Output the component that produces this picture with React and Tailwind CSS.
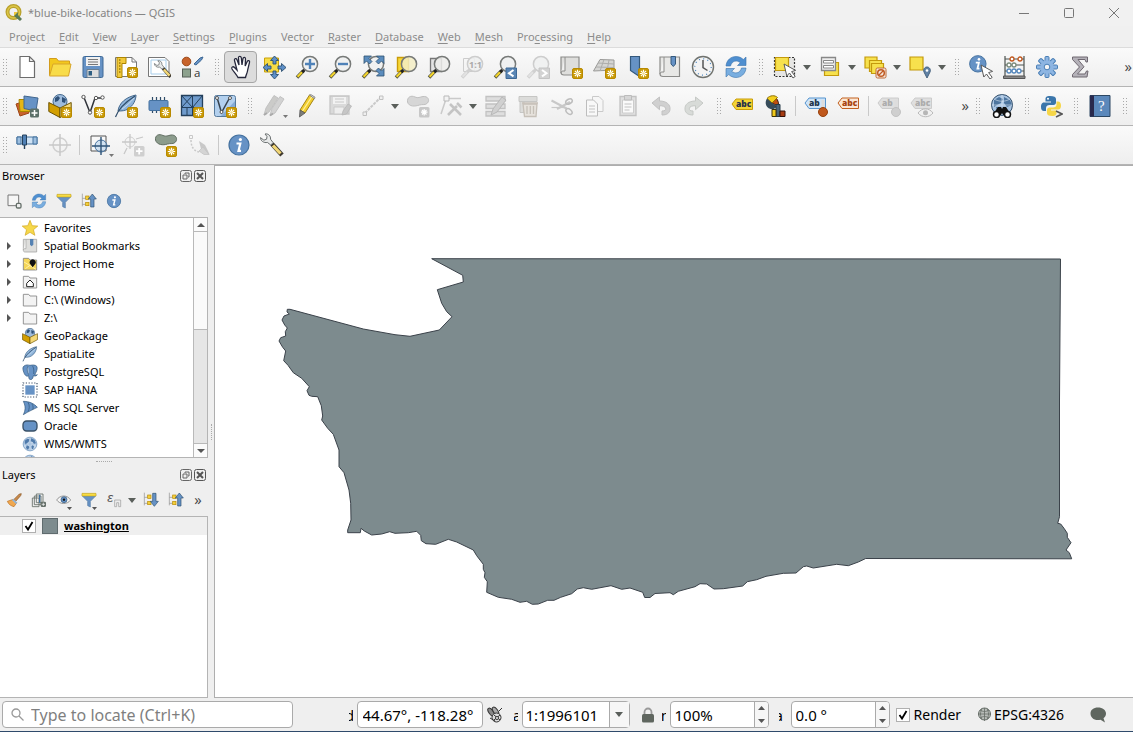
import React from "react";

/* ---------- shared drawing pieces ---------- */

const Svg = ({ size = 24, children }) => (
  <svg width={size} height={size} viewBox="0 0 24 24" fill="none" aria-hidden="true" className="block shrink-0">
    {children}
  </svg>
);

const Badge = ({ x = 13, y = 13 }) => (
  <g transform={`translate(${x} ${y})`}>
    <rect x="0.5" y="0.5" width="10" height="10" rx="1.5" fill="#c99a06" stroke="#b88900" />
    <path d="M5.5 1.8v7.4M1.8 5.5h7.4M2.9 2.9l5.2 5.2M8.1 2.9l-5.2 5.2" stroke="#fff" strokeWidth="1.2" />
    <circle cx="5.5" cy="5.5" r="1.3" fill="#f2dc8a" />
  </g>
);

const Lens = ({ fill = "#eef0f0", faded = false, children }) => (
  <>
    {children}
    <path d="M2 22.5l6.5-6.8" stroke={faded ? "#d0d0d0" : "#55553f"} strokeWidth="3.4" />
    <path d="M2.6 21.8l4.6-4.8" stroke={faded ? "#e2e2e2" : "#f4d52c"} strokeWidth="2" />
    <path d="M7.2 17.2l2.3-2.4" stroke={faded ? "#d0d0d0" : "#222"} strokeWidth="3" />
    <circle cx="15" cy="9" r="7.6" fill={fill} fillOpacity="0.85" stroke={faded ? "#cdcdcd" : "#777a78"} strokeWidth="1.5" />
  </>
);

const Tag = ({ fill, stroke, color, text = "abc", y = 3 }) => (
  <>
    <path d={`M1 ${y + 5}l4-5h16.500v10.500H5z`} fill={fill} stroke={stroke} />
    <text x="5" y={y + 8} fontFamily="Open Sans, sans-serif" fontWeight="800" fontSize="8.500" fill={color}>
      {text}
    </text>
  </>
);

const Cursor = ({ x = 12, y = 9 }) => (
  <path
    transform={`translate(${x} ${y})`}
    d="M0 0l2.8 12 2.7-3 3.5 5 2.2-1.6-3.6-4.8 4-1.2z"
    fill="#fff"
    stroke="#5a5a5a"
    strokeWidth="1"
  />
);

const Wrench = () => (
  <>
    <path d="M12 11l10 11" stroke="#3f3a30" strokeWidth="4.6" />
    <path d="M13 12.500l7.500 8" stroke="#f2d777" strokeWidth="3.2" />
    <path d="M5 1C8 .3 11 2.700 10.500 6.200l2.600 3.400-2.400 2.400-3.300-2.600C4 10.300.3 7.800.5 4.600l3.400 2.600 2.700-1 .4-2.700z" fill="#e8eaea" stroke="#6a6f70" />
  </>
);

const Refresh = () => (
  <>
    <path d="M2 11C2.500 5 7 1.500 12 1.500c3 0 5.500 1.200 7.300 3L22 2v8.500h-8.500l2.800-2.800C13 5 8 5.500 6.500 11z" fill="#4f8fd0" stroke="#3a73ad" strokeWidth=".6" />
    <path d="M22 13c-.5 6-5 9.500-10 9.500-3 0-5.500-1.200-7.300-3L2 22v-8.500h8.500l-2.800 2.800C11 19 16 18.500 17.500 13z" fill="#79aee0" stroke="#3a73ad" strokeWidth=".6" />
  </>
);

const Info = () => (
  <>
    <circle cx="12" cy="12" r="10" fill="#6692c5" stroke="#44719f" strokeWidth="1.2" />
    <circle cx="13.400" cy="6.500" r="1.600" fill="#fff" />
    <path d="M9.500 10.500h3.800l-1.800 7.300h2.500" stroke="#fff" strokeWidth="2.200" />
  </>
);

const Globe = () => (
  <>
    <circle cx="12" cy="12" r="10.300" fill="#c3d6ea" stroke="#5b86b3" />
    <path d="M4 7l4-3 3 1-1 4-3 2-1 2-2-2zM14 3l5 3 2 5-3 1-2-3-3-1zM7 14l3 1 1 2-2 4-3-3zM15 14l3 1-1 4-2 1-1-4z" fill="#4f7aab" />
    <path d="M2 12h20M12 2v20" stroke="#8daecf" strokeWidth=".7" />
  </>
);

const Folder = ({ fill = "#f3f3f3" }) => <path d="M2 3.500h8l2 2.500h10v15H2z" fill={fill} stroke="#868686" strokeWidth="1.300" />;

const Feather = () => (
  <>
    <path d="M4 17C5 9 12 3 22 1c0 5-3 11-8 14-3 1.800-6 2-10 2z" fill="#8fb4da" stroke="#44688c" />
    <path d="M1.500 23C4 16 10 9 21 2" stroke="#2f4d6b" strokeWidth="1.200" />
    <path d="M8 15c4-3 8-6 12-11" stroke="#c6dcf1" strokeWidth="1" />
  </>
);

const Package = () => (
  <>
    <circle cx="12" cy="7.500" r="7" fill="#9dbbdc" stroke="#44688c" />
    <path d="M7 4l3-2 2 2-2 3-3 1zM14 3l4 2-1 4-3-1z" fill="#2f5178" />
    <path d="M.8 8.500L12 14v9.500L.8 17.500z" fill="#d39f00" stroke="#6b5200" />
    <path d="M23.200 8.500L12 14v9.500l11.200-6z" fill="#f5d978" stroke="#6b5200" />
  </>
);

const DbStack = ({ up }) => (
  <>
    <path d="M2 1v19M2 8h5M2 17h5" stroke="#9a9a9a" strokeWidth="1.200" />
    <rect x="7" y="4.500" width="5" height="5" fill="#f3cf3c" stroke="#b88900" />
    <rect x="7" y="14" width="5" height="5" fill="#f3cf3c" stroke="#b88900" />
    {up ? (
      <path d="M17 1.500l6 7.500h-3.500v12h-5V9H11z" fill="#6692c5" stroke="#2e5070" />
    ) : (
      <path d="M17 21.500l6-7.500h-3.500V2h-5v12H11z" fill="#6692c5" stroke="#2e5070" />
    )}
  </>
);

const Funnel = () => (
  <>
    <path d="M2 3h20v3l-8 8v8.500l-4-2V14L2 6z" fill="#6692c5" stroke="#587fa8" />
    <path d="M1.500 2h21v4h-21z" fill="#f7dc45" stroke="#c9a108" strokeWidth=".8" />
  </>
);

const icons = {
  newFile: <path d="M5 1.500h9.500l5 5v16H5zM14.500 1.500v5h5" fill="#fff" stroke="#6d6d6d" strokeWidth="1.200" />,
  open: (
    <>
      <path d="M1.500 20V3.500h7l2 2.500h11v3" fill="#f2c81e" stroke="#d39c1c" />
      <path d="M1.500 21L5 9h18l-2.500 12z" fill="#f8dc4a" stroke="#d8a52a" />
    </>
  ),
  save: (
    <>
      <rect x="2" y="1.500" width="20" height="21" rx="1.500" fill="#6692c5" stroke="#3e6895" />
      <path d="M5 2h14v9H5z" fill="#f1f1f1" />
      <path d="M7 4.500h10M7 7h10M7 9.500h10" stroke="#777" strokeWidth="1.200" />
      <path d="M6 14.500h12v8H6z" fill="#ddd" stroke="#6b7f90" />
      <path d="M7.500 16h3.500v4.500H7.500z" fill="#2f5f82" />
    </>
  ),
  layout: (
    <>
      <path d="M1.500 2.500H18l4.500 4.500v14.500h-21z" fill="#fff" stroke="#777" />
      <path d="M18 2.500V7h4.500" stroke="#777" />
      <path d="M3 2.500h9v6H8v14H3z" fill="#f1c93a" stroke="#ad8500" />
      <path d="M5 5h1.500M5 8h1.500M5 11h1.500M5 14h1.500M5 17h1.500" stroke="#6b5200" />
      <Badge x={13} y={12} />
    </>
  ),
  layoutMgr: (
    <>
      <path d="M1.500 2.500H18l4 4v15H1.500z" fill="#fff" stroke="#777" />
      <path d="M4 5h15v14H4z" stroke="#a7cdea" />
      <g transform="translate(7 5) scale(.76)">
        <Wrench />
      </g>
    </>
  ),
  style: (
    <>
      <circle cx="6.500" cy="6.500" r="4.300" fill="#c7632b" stroke="#9c4716" />
      <path d="M14 9l6-6 3-1-1.500 3L16 10z" fill="#6692c5" stroke="#3e6895" />
      <rect x="2.500" y="14" width="8" height="8" fill="#8da28e" stroke="#555e56" />
      <text x="14" y="22" fontFamily="Open Sans, sans-serif" fontSize="11.500" fill="#333">a</text>
    </>
  ),
  hand: (
    <path
      d="M9 22.500c-1.500-3-4-5.500-6-8.500-1-1.800 1-3 2.500-1.500L8 15 5.500 5.500c-.5-2 1.800-2.500 2.500-.8L10 10 9.500 2.800c0-2 2.500-2 2.800 0L13 10l1-6.500c.4-1.800 2.600-1.500 2.500.4L16.200 11l2-4.500c.8-1.700 2.800-.8 2.300.9-1 4-1.500 6-2 8.600-.5 2.500-1.500 4-2 6.500z"
      fill="#fff"
      stroke="#26283c"
      strokeWidth="1.300"
    />
  ),
  panSel: (
    <>
      <path d="M2.500 3h14v14h-14z" fill="#f7dc45" stroke="#c9a108" />
      {[0, 90, 180, 270].map((a) => (
        <path key={a} transform={`rotate(${a} 12.500 12.500)`} d="M12.500 1l4 4.500H14v3.500h-3V5.500H8.500z" fill="#5d8fc8" stroke="#2e5070" strokeWidth=".9" />
      ))}
    </>
  ),
  zoomIn: (
    <>
      <Lens />
      <path d="M15 4v10M10 9h10" stroke="#4f82b8" strokeWidth="2.400" />
    </>
  ),
  zoomOut: (
    <>
      <Lens />
      <path d="M10 9h10" stroke="#4f82b8" strokeWidth="2.400" />
    </>
  ),
  zoomFull: (
    <>
      <Lens />
      <g fill="#5b8cbd" stroke="#2e5070" strokeWidth=".8">
        <path d="M3 1h7.500L8 3.500l3 3L8.500 9l-3-3L3 8.500z" />
        <path d="M23 1v7.500L20.500 6l-3 3L15 6.500l3-3L15.500 1z" />
        <path d="M23 21h-7.500l2.500-2.500-3-3 2.500-2.500 3 3 2.500-2.500z" />
      </g>
    </>
  ),
  zoomSel: (
    <Lens fill="#f3edc4">
      <path d="M3.500 2.500h11v14h-11z" fill="#f8d838" stroke="#c99c08" strokeWidth="1.400" />
    </Lens>
  ),
  zoomLayer: (
    <Lens fill="#ededeb">
      <path d="M3.500 3.500h11v13h-11z" fill="#e3e3e3" stroke="#777" strokeWidth="1.300" />
    </Lens>
  ),
  zoomNative: (
    <>
      <Lens faded>
        <path d="M3.500 3.500h11v13h-11z" stroke="#ccc" />
      </Lens>
      <text x="9" y="12.500" fontFamily="Open Sans, sans-serif" fontWeight="700" fontSize="9" fill="#aaa">1:1</text>
    </>
  ),
  zoomLast: (
    <>
      <Lens />
      <path d="M13 13h10.500v10.500H13z" fill="#5a86b5" stroke="#3e6895" />
      <path d="M20.500 15l-4.500 3.200 4.500 3.200" stroke="#fff" strokeWidth="2" />
    </>
  ),
  zoomNext: (
    <>
      <Lens faded />
      <path d="M13 13h10.500v10.500H13z" fill="#d3d3d3" stroke="#c4c4c4" />
      <path d="M16 15l4.500 3.200-4.500 3.200" stroke="#fff" strokeWidth="2" />
    </>
  ),
  mapView: (
    <>
      <path d="M2 2h18v18H5c-2 0-3-.8-3-2.500z" fill="#dededc" stroke="#8b8b89" strokeWidth="1.200" />
      <path d="M6 2v14H4c-1.500 0-2 1-2 2" stroke="#8b8b89" fill="#f0f0ef" />
      <Badge x={13} y={13} />
    </>
  ),
  map3d: (
    <>
      <path d="M8 4.500l14 .5v10L1.500 16z" fill="#d5d5d3" stroke="#9a9a98" />
      <path d="M6 8l16 1M4 12l18 .5M12 4.500L8 16M17 5l-2 11" stroke="#adadab" />
      <Badge x={13} y={13} />
    </>
  ),
  bookmark: (
    <>
      <path d="M5.500 1.500h9v20L10 18.500l-4.500-3z" fill="#6692c5" stroke="#34597d" strokeWidth="1.200" />
      <Badge x={13} y={13} />
    </>
  ),
  bookmarks: (
    <>
      <path d="M2 2h19.500v19.500H5c-2 0-3-.8-3-2.500z" fill="#e8e8e6" stroke="#8b8b89" strokeWidth="1.200" />
      <path d="M6 2v15H4c-1.500 0-2 1-2 2" stroke="#8b8b89" fill="#f4f4f3" />
      <path d="M13 1.500h4.500V9l-2.200 2.500L13 9z" fill="#6692c5" stroke="#34597d" />
    </>
  ),
  clock: (
    <>
      <circle cx="12" cy="12" r="10.500" fill="#f3f3f3" stroke="#70736f" strokeWidth="1.400" />
      <circle cx="12" cy="12" r="8.200" stroke="#4a86c0" strokeWidth="1.200" strokeDasharray="1 3.290" />
      <path d="M12 5v7.500l4.500 3" stroke="#555" strokeWidth="1.500" />
    </>
  ),
  refresh: <Refresh />,
  select: (
    <>
      <path d="M1.500 2.500h20v19h-20z" fill="#e6e6e4" stroke="#333" strokeWidth="1.200" strokeDasharray="2 1.500" />
      <path d="M2.500 2.500h13v13h-13z" fill="#f7e14d" stroke="#c49a0c" strokeWidth="1.200" />
      <Cursor x={11} y={9} />
    </>
  ),
  selForm: (
    <>
      <path d="M6.500 7.500h14v13h-14z" fill="#f7e14d" stroke="#c49a0c" strokeWidth="1.200" />
      <path d="M3.500 2.500h14v13h-14z" fill="#eee" stroke="#888" strokeWidth="1.300" />
      <path d="M5.500 5.500h10v2.500h-10zM5.500 10.500h10V13h-10z" fill="#fff" stroke="#888" />
    </>
  ),
  deselect: (
    <>
      <g fill="#f7e14d" stroke="#c49a0c" strokeWidth="1.200">
        <path d="M2 2h12v11H2z" />
        <path d="M6.500 5.500h12v11h-12z" />
        <path d="M8.500 8.500h12v10h-12z" />
      </g>
      <rect x="13" y="13" width="10" height="10" rx="1.500" fill="#f5e5d9" stroke="#bf6a36" />
      <circle cx="18" cy="18" r="3.300" stroke="#c05a22" strokeWidth="1.500" />
      <path d="M15.500 20.500l5-5" stroke="#c05a22" strokeWidth="1.300" />
    </>
  ),
  selLoc: (
    <>
      <path d="M2 2h13v13H2z" fill="#f7e14d" stroke="#c49a0c" strokeWidth="1.200" />
      <path d="M19 23l-3-6c-1-2.500.5-5 3-5s4 2.500 3 5z" fill="#6182a5" stroke="#47637f" />
      <circle cx="19" cy="15.500" r="1.300" fill="#fff" />
    </>
  ),
  identify: (
    <>
      <g transform="translate(-1 -1) scale(.82)">
        <Info />
      </g>
      <Cursor x={12} y={10} />
    </>
  ),
  abacus: (
    <>
      <path d="M3 1v21M22 1v21M3 4h19M3 10h19M3 16h19" stroke="#4e5450" strokeWidth="1.200" />
      <path d="M1.500 21h21.500v2.500H1.500z" fill="#888" stroke="#555" />
      <g fill="#fff" strokeWidth="1.300">
        <g stroke="#c1571d">
          <circle cx="10" cy="4" r="2" />
          <circle cx="18" cy="4" r="2" />
        </g>
        <g stroke="#7b8c7c">
          <circle cx="7" cy="10" r="2" />
          <circle cx="12" cy="10" r="2" />
        </g>
        <g stroke="#5487bd">
          <circle cx="7" cy="16" r="2" />
          <circle cx="12" cy="16" r="2" />
          <circle cx="17" cy="16" r="2" />
        </g>
      </g>
    </>
  ),
  gear: (
    <>
      {[0, 45, 90, 135].map((a) => (
        <rect key={a} transform={`rotate(${a} 12 12)`} x="10" y="1.500" width="4" height="21" rx="1" fill="#8db5e2" stroke="#4a7fb5" />
      ))}
      <circle cx="12" cy="12" r="6.800" fill="#8db5e2" />
      <circle cx="12" cy="12" r="2.800" fill="#f6f6f6" stroke="#4a7fb5" />
    </>
  ),
  sigma: <path d="M4.500 2h15v5h-1.500l-1-2.500H10l6 7.300L9.500 19H17l1.500-3H20l-1 6H4.500v-2.500l7-7.500-7-7.500z" fill="#b4b1b8" stroke="#6f6871" />,

  dsm: (
    <>
      <path d="M1 10l9-3 4 12-9 3z" fill="#c8622c" stroke="#9d4516" />
      <path d="M4 5.500h11v12H5z" fill="#e5b614" stroke="#a98500" />
      <path d="M9 2l14 2-2 13-12-2.500z" fill="#6692c5" stroke="#41668e" />
      <rect x="15" y="14.500" width="9" height="9" rx="1.500" fill="#5c7069" />
      <path d="M19.500 16v6M16.500 19h6" stroke="#fff" strokeWidth="1.500" />
    </>
  ),
  gpkg: (
    <>
      <Package />
      <Badge x={13} y={13} />
    </>
  ),
  shp: (
    <>
      <path d="M3 3.500l6 15 5-14.500h7" stroke="#30343a" strokeWidth="1.500" />
      <g fill="#fff" stroke="#555">
        <circle cx="2.500" cy="3" r="1.700" />
        <circle cx="9" cy="18.500" r="1.700" />
        <circle cx="15" cy="4" r="1.700" />
        <circle cx="21.500" cy="3.500" r="1.700" />
      </g>
      <Badge x={13} y={13} />
    </>
  ),
  feather: (
    <>
      <Feather />
      <Badge x={13} y={13} />
    </>
  ),
  chip: (
    <>
      <path d="M5.500 3v16M9.500 3v16M13.500 3v16M17.500 3v16" stroke="#2f4c69" strokeWidth="1.200" />
      <rect x="2" y="6.500" width="19" height="10" rx="1" fill="#6692c5" stroke="#44719f" />
      <Badge x={13} y={13} />
    </>
  ),
  mesh: (
    <>
      <path d="M1.500 1.500h21v20h-21z" fill="#6f9bcc" stroke="#24405c" strokeWidth="1.300" />
      <path d="M1.500 13.500h21M12.500 1.500v20M1.500 1.500l11 12M12.500 1.500l-11 12M22.500 1.500l-10 12M7 13.500v8" stroke="#24405c" />
      <Badge x={13} y={13} />
    </>
  ),
  vlayer: (
    <>
      <rect x="1.500" y="1.500" width="21" height="21" rx="2" fill="#b3d0ee" stroke="#55799c" />
      <path d="M22 7L8 22h14z" fill="#6692c5" fillOpacity=".6" />
      <path d="M4 3.500l4.500 15 8-14.500" stroke="#38434f" strokeWidth="1.500" />
      <g fill="#fff" stroke="#555">
        <circle cx="4" cy="4" r="1.500" />
        <circle cx="17" cy="4" r="1.500" />
        <circle cx="8.500" cy="18" r="1.500" />
      </g>
      <Badge x={13} y={13} />
    </>
  ),
  pencils: (
    <>
      <path d="M2 21l2-7L12 1.500l4 2.500L7 18z" fill="#cbcbc9" stroke="#c2c2c2" />
      <path d="M8 21.500l2-7 8-12 4 2.500-9 14z" fill="#d2d2d2" stroke="#c2c2c2" />
      <path d="M2 21l3-2M8 21.500l3-2" stroke="#aaa" strokeWidth="2" />
    </>
  ),
  pencil: (
    <>
      <path d="M5 16L14.500 1l5 3L10 19z" fill="#f2cf2f" stroke="#a58415" />
      <path d="M7.500 17L17 2.500" stroke="#fff0a0" strokeWidth="1.200" />
      <path d="M14.500 1l1.200-.5 4.300 2.700-.5 1.500z" fill="#eee" stroke="#888" />
      <path d="M5 16l5 3-5.500 4z" fill="#7c7d78" stroke="#555" strokeWidth=".8" />
    </>
  ),
  saveEdit: (
    <>
      <path d="M2 2h19v18H2z" fill="#dadada" stroke="#c6c6c6" strokeWidth="1.300" />
      <path d="M5 3h13v7H5z" fill="#f2f2f2" />
      <path d="M7 5h9M7 8h9" stroke="#c8c8c8" />
      <path d="M6 13h10v7H6z" fill="#eee" stroke="#cacaca" />
      <path d="M14 21l1-4 5-7 3.500 2-5 8z" fill="#c6c6c6" stroke="#b6b6b6" strokeWidth=".8" />
    </>
  ),
  segment: (
    <>
      <path d="M4 19L19 4" stroke="#c9c9c9" strokeWidth="2" strokeDasharray="3 1" />
      <path d="M2 18h3.500v3.500H2zM18.500 2H22v3.500h-3.500z" fill="#efefef" stroke="#c0c0c0" />
    </>
  ),
  blobGray: (
    <>
      <path d="M1.500 8C1 3 5 1 9 3c3 1.500 5 0 8-.5C22 2 24 6 21.500 9c-2 2.500-5 1-8 2C9 12.500 3 13 1.500 8z" fill="#d6d6d6" stroke="#c0c0c0" />
      <rect x="13" y="13" width="10.500" height="10.500" rx="1.500" fill="#c8c8c8" />
      <path d="M18.200 15v6.500M15 18.200h6.500M16 16l4.500 4.500M20.500 16L16 20.500" stroke="#fff" strokeWidth="1.200" />
    </>
  ),
  vertex: (
    <>
      <path d="M8 4.500h14M6.500 6.500L2 20" stroke="#cacaca" strokeWidth="1.500" />
      <path d="M5 2h5v5H5z" fill="#f3f3f3" stroke="#b9b9b9" />
      <path d="M9 21l9-9M11 10l11 11M18 9l4.500 4.500" stroke="#c4c4c4" strokeWidth="2.600" />
    </>
  ),
  multi: (
    <>
      <path d="M2 2.500h19v4.500H2zM2 10h19v4.500H2zM2 17.500h19V22H2z" fill="#dedede" stroke="#c2c2c2" strokeWidth="1.300" />
      <path d="M7 21l2-6L18 3l4 3-9 12z" fill="#d0d0d0" stroke="#b8b8b8" />
    </>
  ),
  trash: (
    <>
      <path d="M2 2.500h18v5H2zM3 7.500h4v11H3z" fill="#dcdcda" stroke="#c6c6c4" />
      <path d="M6 10h14l-1 12.500H7.500z" fill="#e6e2dc" stroke="#c6c0b8" strokeWidth="1.300" />
      <path d="M5 9h16M10 12v8M13.300 12v8M16.500 12v8" stroke="#c6c0b8" strokeWidth="1.300" />
    </>
  ),
  cut: (
    <>
      <path d="M1.500 6.500l15 8M7 15l13-7" stroke="#c8c8c8" strokeWidth="2" />
      <path d="M1.500 13.500h5l10 0" stroke="#c8c8c8" strokeWidth="1.200" />
      <ellipse cx="19" cy="7.500" rx="3.500" ry="2.300" stroke="#bdbdbd" strokeWidth="1.500" transform="rotate(-30 19 7.500)" />
      <ellipse cx="19" cy="17.500" rx="3.500" ry="2.300" stroke="#bdbdbd" strokeWidth="1.500" transform="rotate(40 19 17.500)" />
    </>
  ),
  copy: (
    <>
      <path d="M9.500 2.500h6.500l4 4v11H9.500z" fill="#f6f6f6" stroke="#cacaca" />
      <path d="M3.500 6h7l4 4v12h-11z" fill="#f8f8f8" stroke="#bdbdbd" />
      <path d="M6 12h6M6 15h6M6 18h6" stroke="#c2c2c2" />
    </>
  ),
  paste: (
    <>
      <path d="M4 2.500h16v19H4z" fill="#e0e0e0" stroke="#c2c2c2" strokeWidth="1.300" />
      <path d="M6.500 6h11v13h-11z" fill="#fafafa" stroke="#cccccc" />
      <path d="M8.500 1.500h7V6h-7z" fill="#d6d6d6" stroke="#bcbcbc" />
      <path d="M8.500 10h7M8.500 13h7M8.500 16h5" stroke="#c2c2c2" />
    </>
  ),
  undo: <path d="M3 9l7.500-6v4c7 0 11 3.500 10.500 8.500-.4 3.500-3 5.500-8 5.500v-4c3 0 4-1 3.600-2.800-.4-1.700-2.600-2.500-6.100-2.500v4z" fill="#d0d0d0" stroke="#c2c2c2" />,
  redo: <path d="M21 9l-7.500-6v4C6.500 7 2.500 10.500 3 15.500c.4 3.500 3 5.500 8 5.500v-4c-3 0-4-1-3.600-2.800.4-1.700 2.600-2.500 6.100-2.500v4z" fill="#d8dbd8" stroke="#c6c9c6" />,
  label: <Tag y={5} fill="#f3d434" stroke="#c99c08" color="#26304a" />,
  diagram: (
    <>
      <path d="M8 9V2.500a7 7 0 016 9.500z" fill="#c0500f" stroke="#3b1a08" />
      <path d="M8 9L3 4.500C6 1 11 1 13.500 3.500z" fill="#f4cf1e" stroke="#8d7000" />
      <path d="M8 9L3 4.500C0 9 2 15 9 15.500l4.500-3z" fill="#374c5a" />
      <path d="M12 10.500h4v12h-4z" fill="#4a6478" stroke="#273a48" />
      <path d="M8 15.500h4v7H8z" fill="#efc91b" stroke="#3c3208" />
      <path d="M16 17h5v5.500h-5z" fill="#a53a10" stroke="#30100a" />
    </>
  ),
  labelPin: (
    <>
      <Tag y={4} fill="#cfe4f8" stroke="#5795cf" color="#22344a" text="ab" />
      <path d="M19 6v9" stroke="#ddd" strokeWidth="3" />
      <circle cx="19" cy="18" r="4.500" fill="#c0581c" stroke="#96400c" />
    </>
  ),
  labelRed: <Tag y={4} fill="#fbe6d4" stroke="#c1601f" color="#a84410" />,
  labelPinGray: (
    <>
      <Tag y={4} fill="#dfdfdf" stroke="#cccccc" color="#acacac" text="ab" />
      <path d="M19 6v9" stroke="#ddd" strokeWidth="3" />
      <circle cx="19" cy="18" r="4.500" fill="#cfcfcf" stroke="#c2c2c2" />
    </>
  ),
  labelEyeGray: (
    <>
      <Tag y={4} fill="#dfdfdf" stroke="#cccccc" color="#acacac" />
      <path d="M8 19c4-5.500 11-5.500 15 0-4 5-11 5-15 0z" fill="#f0f0f0" stroke="#b9b9b9" />
      <circle cx="15.500" cy="18.800" r="2.500" fill="#b6b6b6" />
    </>
  ),
  globeSearch: (
    <>
      <circle cx="12" cy="11" r="10.500" fill="#a8c4e2" stroke="#2d4a68" />
      <path d="M4 6l5-3 4 2-2 4-4 2-3 2zM14 3l6 3 2 5-5 2-3-4zM6 13h5l2 4h-6z" fill="#4d759f" />
      <path d="M1.500 11h21M12 .5v21M4 5c5 3 11 3 16 0" stroke="#dce8f4" strokeWidth=".6" />
      <path d="M8 13h3l1 2 1-2h3l4 6v2h-7l-1-2-1 2H4v-2z" fill="#111" />
      <circle cx="6.500" cy="20.500" r="3" fill="#fff" stroke="#111" strokeWidth="1.500" />
      <circle cx="17.500" cy="20.500" r="3" fill="#fff" stroke="#111" strokeWidth="1.500" />
    </>
  ),
  python: (
    <>
      <path d="M11 2c-4 0-4.500 1.500-4.500 3v2.500H12v1H5C2.500 8.500 2 11 2 13c0 2.500 1 4 3 4h2v-3c0-2 1.500-3 3.500-3h4c1.500 0 2.500-1 2.500-2.500V5c0-2-2-3-6-3z" fill="#3b76ab" />
      <path d="M13 22c4 0 4.500-1.500 4.500-3v-2.500H12v-1h7c2.500 0 3-2 3-4s-1-4-3-4h-1.500v3c0 2-1.500 3-3.500 3h-3.500C9 13.500 8 14.500 8 16v3c0 2 1.500 3 5 3z" fill="#f6d648" />
      <circle cx="9" cy="4.800" r="1" fill="#fff" />
      <path d="M17 17l6 3-6 3" stroke="#555" strokeWidth="1.600" />
    </>
  ),
  help: (
    <>
      <path d="M2 1.500h20v21H2z" fill="#5b88bb" stroke="#2c4763" />
      <path d="M2 1.500h4v21H2z" fill="#29294d" />
      <text x="10" y="16.500" fontFamily="Liberation Serif, serif" fontSize="15" fill="#fff">?</text>
    </>
  ),

  snap: (
    <>
      <path d="M2 4h20v7H2z" fill="#cfe2f4" stroke="#45729e" />
      <path d="M2 4h4v7H2zM18 4h4v7h-4z" fill="#9dbfe0" stroke="#45729e" />
      <path d="M7.500 2h4v10h-4z" fill="#4f80b5" stroke="#26415c" />
      <path d="M9.500 12v4" stroke="#26415c" strokeWidth="1.400" />
    </>
  ),
  crossGray: (
    <>
      <circle cx="12" cy="12" r="7" stroke="#d0d0d0" strokeWidth="1.500" />
      <path d="M12 1v22M1 12h22" stroke="#c8c8c8" strokeWidth="1.500" />
    </>
  ),
  snapLayer: (
    <>
      <path d="M3 3h15v15H3z" fill="#f8f8f8" stroke="#555" />
      <circle cx="13" cy="13" r="6" fill="#a8c9ea" fillOpacity=".5" stroke="#44719f" />
      <path d="M13 4v18M4 13h18" stroke="#2f5478" strokeWidth="1.400" />
    </>
  ),
  topo: (
    <>
      <circle cx="9" cy="9" r="5" stroke="#d0d0d0" />
      <path d="M9 1v15M1 9h15M3 21l3-6M15 6l7-2" stroke="#c8c8c8" strokeWidth="1.300" />
      <rect x="13" y="13" width="10.500" height="10.500" rx="1.500" fill="#cfcfcf" />
      <path d="M18.200 15v6.500M15 18.200h6.500" stroke="#fff" strokeWidth="1.800" />
    </>
  ),
  blob: (
    <>
      <path d="M1.500 7C1 2 5 .5 9 2.500c3 1.500 5 0 8-.5C22 1.500 24 6 21.500 9c-2 2.500-5 1-8 2C9 12.500 3 12 1.500 7z" fill="#8c9c8d" stroke="#626f63" />
      <Badge x={12} y={13} />
    </>
  ),
  trace: (
    <>
      <path d="M2.500 2.500h3v3h-3z" stroke="#c8c8c8" />
      <path d="M4 7c0 7 3 11 8 12" stroke="#c9c9c9" strokeWidth="1.500" strokeDasharray="2 1.500" />
      <path d="M12 8l6 4 3 6 1.500 3.500-3-.5-5-3z" fill="#c8c8c8" />
      <path d="M12 18l4-4 6 7.500h-5z" fill="#d4d4d4" stroke="#c4c4c4" strokeWidth=".8" />
    </>
  ),
  info: <Info />,
  wrench: <Wrench />,

  addLayer: (
    <>
      <path d="M3 3h16v16H3z" fill="#f6f6f6" stroke="#777" strokeWidth="1.500" />
      <rect x="15.500" y="15.500" width="7" height="7" rx="2" fill="#eee" stroke="#66706a" strokeWidth="2" />
    </>
  ),
  funnel: <Funnel />,
  dbUp: <DbStack up />,
  dbDown: <DbStack />,
  star: <path d="M12 .5l3.300 8 8.400.6-6.500 5.500 2.100 8.400L12 18.500 4.700 23l2.100-8.400L.3 9.100l8.400-.6z" fill="#f6d84a" stroke="#d0a41c" />,
  treeBook: (
    <>
      <path d="M2 2h20v19H5c-2 0-3-.8-3-2.500z" fill="#dededc" stroke="#a5a5a3" strokeWidth="1.200" />
      <path d="M6 2v14H4c-1.500 0-2 1-2 2" stroke="#a5a5a3" fill="#f4f4f3" />
      <path d="M12 1.500h5V10l-2.500 2.500L12 10z" fill="#5582b3" />
    </>
  ),
  projHome: (
    <>
      <Folder fill="#f5d657" />
      <path d="M3 9l18 11M5 19l7-5" stroke="#fff0a8" strokeWidth="1.500" />
      <path d="M16 17l-3.500-4.500a4.500 4.500 0 117 0z" fill="#111" />
    </>
  ),
  home: (
    <>
      <Folder />
      <path d="M7 14l5-5 5 5v5H7z" fill="#fff" stroke="#222" strokeWidth="1.500" />
    </>
  ),
  folder: <Folder />,
  package: <Package />,
  featherOnly: <Feather />,
  elephant: (
    <path d="M3 3c4-2.500 6-1.500 9-1 3-.5 8-1.500 10.500 2 1 4-1 8-3.500 12 2 .5 3 .5 4 0-1 2-4 2.500-6 1.500-.5 3-1 5.500-4 6-2.500 0-3-3-3-6-3 2-6 0-8-7C1 7 1 4.500 3 3zM9 3c-2 4-1 8 1 13M16 3c2 4 2 8 1.500 12" fill="#6692c5" stroke="#2f5478" />
  ),
  hana: (
    <>
      <path d="M5 5h14v14H5z" fill="#6692c5" />
      <path d="M1.500 1.500h21v21h-21z" stroke="#3c4f66" strokeWidth="1.800" strokeDasharray="1.800 2.400" />
    </>
  ),
  mssql: (
    <>
      <path d="M2 2c8 0 16 3 21 9-6 3-13 6-21 11 3-6 4-12 0-20z" fill="#6692c5" stroke="#2f5478" />
      <path d="M9 3.500c3 5 2 10 0 14M15 6c2 3 2 6 1 8.500" stroke="#2f5478" />
    </>
  ),
  oracle: <rect x="1.500" y="4.500" width="21" height="15" rx="5.500" fill="#6692c5" stroke="#3a5168" strokeWidth="2" />,
  globe: <Globe />,
  brush: (
    <>
      <path d="M11 12L20 3l3-.5-1 3-8 9z" fill="#c98b4d" stroke="#8a5626" />
      <path d="M2 14l9-3 5 5-4 6c-4-1-8-3-10-8z" fill="#f0a850" stroke="#b96f22" />
      <path d="M10 11l6 6" stroke="#8fb4da" strokeWidth="3" />
    </>
  ),
  group: (
    <>
      <path d="M2 9h10v13H2zM5 6h10v13H5zM8 3h10v13H8z" stroke="#666f69" strokeWidth="1.300" />
      <path d="M13 4v12" stroke="#3d6f9f" strokeWidth="2" />
      <rect x="14.500" y="14.500" width="8" height="8" rx="2" fill="#66706a" />
      <path d="M18.500 16v5M16 18.500h5" stroke="#fff" />
    </>
  ),
  eye: (
    <>
      <path d="M1 12C6 4 17 4 22 12c-5 7-16 7-21 0z" fill="#f5f5f5" stroke="#888" strokeWidth="1.300" />
      <circle cx="12" cy="11.500" r="4.500" fill="#6692c5" stroke="#2f5478" />
      <circle cx="12" cy="11.500" r="1.800" fill="#111" />
    </>
  ),
  epsilon: (
    <>
      <text x="2" y="15" fontFamily="Liberation Sans, sans-serif" fontStyle="italic" fontSize="20" fill="#555">ε</text>
      <path d="M13 12h9v10h-3v-6h-3v6h-3z" fill="#eee" stroke="#999" />
    </>
  ),
};

/* ---------- toolbar widgets ---------- */

const Caret = () => (
  <svg width="8" height="5" viewBox="0 0 8 5" aria-hidden="true" className="block">
    <path d="M0 0h8L4 5z" fill="#5a5f5b" />
  </svg>
);

const Tool = ({ icon, label, active, corner }) => (
  <button
    type="button"
    aria-label={label}
    className={
      active
        ? "relative flex h-8 w-[33px] shrink-0 items-center justify-center rounded-sm border border-[#a6a6a6] bg-[#dcdcdc]"
        : "relative flex h-8 w-[33px] shrink-0 items-center justify-center"
    }
  >
    <Svg>{icons[icon]}</Svg>
    {corner && (
      <svg width="5" height="3" viewBox="0 0 5 3" aria-hidden="true" className="absolute right-0.5 bottom-1">
        <path d="M0 0h5L2.500 3z" fill="#777" />
      </svg>
    )}
  </button>
);

const DropTool = ({ icon, label }) => (
  <div className="flex shrink-0 items-center">
    <Tool icon={icon} label={label} />
    <button type="button" aria-label={label + " options"} className="flex h-8 w-3 items-center justify-center">
      <Caret />
    </button>
  </div>
);

const Handle = ({ first }) => (
  <div className={first ? "flex w-2.5 shrink-0 justify-start pl-[3px]" : "flex w-4 shrink-0 justify-center pl-0.5"}>
    <svg width="5" height="17" viewBox="0 0 5 17" aria-hidden="true">
      {[0, 3, 6, 9, 12, 15].map((y) => (
        <path key={y} d={`M0 ${y}h1v1h-1zM3 ${y}h1v1h-1z`} fill="#a9a9a9" />
      ))}
    </svg>
  </div>
);

const Divider = () => (
  <div className="flex h-5 w-[7px] shrink-0 justify-center">
    <div className="w-px bg-[#c9c9c9]" />
  </div>
);

const More = () => (
  <button type="button" aria-label="More tools" className="pb-0.5 font-['Open_Sans',sans-serif] text-[15px] leading-4 text-[#444]">
    »
  </button>
);

const Bar = ({ children }) => (
  <div role="toolbar" className="flex h-[39px] shrink-0 items-center overflow-hidden border-b border-[#b4b4b4] bg-linear-to-b from-[#fafafa] to-[#eeeeee]">
    {children}
  </div>
);

const tools = (list) => list.map(([icon, label]) => <Tool key={icon} icon={icon} label={label} />);

/* ---------- docks ---------- */

const SmallTool = ({ icon, label, corner }) => (
  <button type="button" aria-label={label} className="relative flex h-6 w-[25px] shrink-0 items-center justify-center">
    <Svg size={16}>{icons[icon]}</Svg>
    {corner && (
      <svg width="5" height="3" viewBox="0 0 5 3" aria-hidden="true" className="absolute right-1 bottom-0.5">
        <path d="M0 0h5L2.500 3z" fill="#555" />
      </svg>
    )}
  </button>
);

const DockTitle = ({ title }) => (
  <div className="flex h-[21px] shrink-0 items-center pr-0.5 pl-0.5">
    <h2 className="flex-1">{title}</h2>
    <button type="button" aria-label={"Float " + title} className="mr-0.5">
      <svg width="12" height="12" viewBox="0 0 12 12" fill="none" stroke="#666" className="block">
        <rect x=".5" y=".5" width="11" height="11" rx="2" />
        <path d="M5 4V3h4v4H8M3 5h4v4H3z" />
      </svg>
    </button>
    <button type="button" aria-label={"Close " + title}>
      <svg width="12" height="12" viewBox="0 0 12 12" fill="none" stroke="#555" className="block">
        <rect x=".5" y=".5" width="11" height="11" rx="2" />
        <path d="M3 3l6 6M9 3l-6 6" strokeWidth="2" />
      </svg>
    </button>
  </div>
);

const tree = [
  ["star", "Favorites", false],
  ["treeBook", "Spatial Bookmarks", true],
  ["projHome", "Project Home", true],
  ["home", "Home", true],
  ["folder", "C:\\ (Windows)", true],
  ["folder", "Z:\\", true],
  ["package", "GeoPackage", false],
  ["featherOnly", "SpatiaLite", false],
  ["elephant", "PostgreSQL", false],
  ["hana", "SAP HANA", false],
  ["mssql", "MS SQL Server", false],
  ["oracle", "Oracle", false],
  ["globe", "WMS/WMTS", false],
  ["globe", "", false],
];

const TreeRow = ({ icon, label, open }) => (
  <li className="flex h-[18px] shrink-0 items-center">
    <span className="flex w-[22px] pl-[7px]">
      {open && (
        <svg width="4" height="8" viewBox="0 0 4 8" aria-hidden="true">
          <path d="M0 0l4 4-4 4z" fill="#555" />
        </svg>
      )}
    </span>
    <Svg size={16}>{icons[icon]}</Svg>
    {label && (
      <button type="button" className="pl-1.5 text-left whitespace-nowrap">
        {label}
      </button>
    )}
  </li>
);

const ScrollArrow = ({ up }) => (
  <button
    type="button"
    aria-label={up ? "Scroll up" : "Scroll down"}
    className={
      up
        ? "flex h-3.5 items-center justify-center border-b border-[#b9b9b9] bg-[#fbfbfb]"
        : "flex h-3.5 items-center justify-center border-t border-[#b9b9b9] bg-[#fbfbfb]"
    }
  >
    <svg width="8" height="4" viewBox="0 0 8 4" aria-hidden="true">
      <path d={up ? "M0 4h8L4 0z" : "M0 0h8L4 4z"} fill="#555" />
    </svg>
  </button>
);

const Check = ({ id }) => (
  <span className="relative flex shrink-0">
    <input id={id} type="checkbox" defaultChecked className="size-3.5 appearance-none border border-[#b0b0b0] bg-white" />
    <svg width="14" height="14" viewBox="0 0 14 14" fill="none" aria-hidden="true" className="pointer-events-none absolute inset-0">
      <path d="M3.500 7l2.500 3.500L10.500 3" stroke="#000" strokeWidth="1.800" />
    </svg>
  </span>
);

/* ---------- map ---------- */

const outline =
  "431.7,258.7 462.7,275.3 463.3,282 437.3,289.7 441.7,303.3 446.7,311.7 452,316.7 439.3,330 410,336.3 395,334.7 363.3,329 290,309.3 287.3,309.3 287,312 289.3,314 284,316 282,320 284.7,325 287.3,328 285.3,331.7 285.7,336 280.7,337.7 279,341 282.7,347.3 285.7,351 283.7,360.7 288,365.3 293.3,372.7 301.7,378.3 309.3,386.7 307,390.7 309,395.3 311.7,396.3 317.7,396.7 321.3,405.7 322.7,416 321.7,420 327.7,428.3 333.3,434.3 339,450 339,466.7 344,472.7 349,490 350.7,503.3 351,520 347.7,530 347.7,532.7 360.3,532.7 361,528.3 364.3,531 371.7,535 381.7,534 389.7,531.7 395,533.3 408.3,532.7 416.7,531.3 420.7,535.3 421.3,540.7 426,543.7 435.7,544.3 448.3,539.3 456.7,542 473.3,550 476.7,555.7 483.3,564.3 483.3,569.3 485,572.7 484.3,577.3 487.3,581.7 486.7,592.3 498.3,597.3 511.7,599.3 520,602.3 526.7,601.3 532.3,604.3 538.3,604 547.7,600.3 554,600.3 560.7,597.3 571.7,593.7 577.3,589 583.3,587.7 591.7,589.3 611,585.7 621.7,589.3 630,588 642.7,592.3 644.7,597.5 650,597.5 655,593.5 670,592.7 673.3,594.7 678.3,591.3 695,586.7 700,583.7 706.7,584 714,589 723.3,588.7 742.7,586 747.3,581.7 756.7,579.7 766,576.3 783.3,573.3 796,573 803.3,566.7 806.7,566 813.3,568 836.7,564.3 848.3,565.7 858.3,562 865.7,558.5 1071.7,558.8 1069.3,552.7 1066,550 1071,542.7 1067.3,537.3 1067.3,533.3 1064,528.3 1060.7,524 1057.7,523.3 1059.5,516.7 1059.5,400 1060.5,259";

const Clipped = ({ htmlFor, children }) => (
  <label htmlFor={htmlFor} className="flex w-1 shrink-0 justify-center overflow-hidden">
    {children}
  </label>
);

const Spin = ({ id, value, label }) => (
  <div className="flex h-[27px] w-[99px] shrink-0 overflow-hidden rounded-sm border border-[#aaa] bg-white">
    <input id={id} aria-label={label} defaultValue={value} className="min-w-0 flex-1 px-1 outline-none" />
    <div className="flex w-3.5 flex-col border-l border-[#aaa] bg-[#f6f6f6]">
      <button type="button" aria-label={label + " up"} className="flex flex-1 items-center justify-center">
        <svg width="7" height="4" viewBox="0 0 7 4"><path d="M0 4h7L3.500 0z" fill="#555" /></svg>
      </button>
      <button type="button" aria-label={label + " down"} className="flex flex-1 items-center justify-center">
        <svg width="7" height="4" viewBox="0 0 7 4"><path d="M0 0h7L3.500 4z" fill="#555" /></svg>
      </button>
    </div>
  </div>
);

const menus = [
  ["Project", 3], ["Edit", 0], ["View", 0], ["Layer", 0], ["Settings", 0], ["Plugins", 0], ["Vector", 4],
  ["Raster", 0], ["Database", 0], ["Web", 0], ["Mesh", 0], ["Processing", 3], ["Help", 0],
];

export default function App() {
  return (
    <div className="flex h-screen min-h-[600px] flex-col overflow-hidden bg-[#efefef] font-['Noto_Sans','Open_Sans',sans-serif] text-[11px] leading-4 text-black">
      <header className="flex h-[26px] shrink-0 items-center bg-[#f1f1f1] pl-[5px] text-[#858585]">
        <svg width="18" height="18" viewBox="0 0 18 18" fill="none" aria-hidden="true">
          <circle cx="8.500" cy="8" r="6" stroke="#b9a12c" strokeWidth="4" />
          <circle cx="8.500" cy="8" r="6" stroke="#dcc648" strokeWidth="1.500" />
          <path d="M9 8h4v3l4 4-2 2-6-5z" fill="#5b7a56" />
          <path d="M9 8h4L9 12z" fill="#eec73a" />
        </svg>
        <h1 className="flex-1 pl-[5px]">*blue-bike-locations — QGIS</h1>
        <div className="flex items-center gap-[35px] pr-3.5">
          <button type="button" aria-label="Minimize">
            <svg width="10" height="10" viewBox="0 0 10 10" className="block"><path d="M0 5.500h10" stroke="#777" /></svg>
          </button>
          <button type="button" aria-label="Maximize">
            <svg width="10" height="10" viewBox="0 0 10 10" fill="none" className="block"><rect x=".5" y=".5" width="9" height="9" rx="1" stroke="#777" /></svg>
          </button>
          <button type="button" aria-label="Close">
            <svg width="10" height="10" viewBox="0 0 10 10" className="block"><path d="M0 0l10 10M10 0L0 10" stroke="#777" /></svg>
          </button>
        </div>
      </header>

      <nav className="flex h-[22px] shrink-0 items-center gap-3.5 border-b border-[#dcdcdc] bg-[#f0f0f0] pt-px pl-[9px] text-[#8c8c8c]">
        {menus.map(([name, key]) => (
          <button type="button" key={name}>
            {name.slice(0, key)}
            <span className="underline underline-offset-2">{name[key]}</span>
            {name.slice(key + 1)}
          </button>
        ))}
      </nav>

      <Bar>
        <Handle first />
        {tools([["newFile", "New Project"], ["open", "Open Project"], ["save", "Save Project"], ["layout", "New Print Layout"], ["layoutMgr", "Layout Manager"], ["style", "Style Manager"]])}
        <Handle />
        <Tool icon="hand" label="Pan Map" active />
        {tools([["panSel", "Pan to Selection"], ["zoomIn", "Zoom In"], ["zoomOut", "Zoom Out"], ["zoomFull", "Zoom Full"], ["zoomSel", "Zoom to Selection"], ["zoomLayer", "Zoom to Layer"], ["zoomNative", "Zoom to Native Resolution"], ["zoomLast", "Zoom Last"], ["zoomNext", "Zoom Next"], ["mapView", "New Map View"], ["map3d", "New 3D Map View"], ["bookmark", "New Bookmark"], ["bookmarks", "Show Bookmarks"], ["clock", "Temporal Controller"], ["refresh", "Refresh"]])}
        <Handle />
        <DropTool icon="select" label="Select Features" />
        <DropTool icon="selForm" label="Select by Value" />
        <DropTool icon="deselect" label="Deselect" />
        <DropTool icon="selLoc" label="Select by Location" />
        <Handle />
        {tools([["identify", "Identify"], ["abacus", "Field Calculator"], ["gear", "Toolbox"], ["sigma", "Statistics"]])}
        <div className="flex flex-1 justify-end pr-px">
          <More />
        </div>
      </Bar>

      <Bar>
        <Handle first />
        {tools([["dsm", "Data Source Manager"], ["gpkg", "New GeoPackage"], ["shp", "New Shapefile"], ["feather", "New SpatiaLite"], ["chip", "New Scratch Layer"], ["mesh", "New Mesh"], ["vlayer", "New Virtual Layer"]])}
        <Handle />
        <Tool icon="pencils" label="Current Edits" corner />
        {tools([["pencil", "Toggle Editing"], ["saveEdit", "Save Edits"]])}
        <DropTool icon="segment" label="Digitize" />
        <Tool icon="blobGray" label="Add Polygon" />
        <DropTool icon="vertex" label="Vertex Tool" />
        {tools([["multi", "Modify Attributes"], ["trash", "Delete Selected"], ["cut", "Cut"], ["copy", "Copy"], ["paste", "Paste"], ["undo", "Undo"], ["redo", "Redo"]])}
        <Handle />
        {tools([["label", "Labeling"], ["diagram", "Diagrams"]])}
        <Divider />
        {tools([["labelPin", "Pin Labels"], ["labelRed", "Show Unplaced Labels"]])}
        <Divider />
        {tools([["labelPinGray", "Move Label"], ["labelEyeGray", "Show Labels"]])}
        <div className="flex w-[31px] shrink-0 justify-end">
          <More />
        </div>
        <Handle />
        <Tool icon="globeSearch" label="MetaSearch" />
        <Handle />
        <Tool icon="python" label="Python Console" />
        <Handle />
        <Tool icon="help" label="Help Contents" />
        <Handle />
      </Bar>

      <Bar>
        <Handle first />
        {tools([["snap", "Enable Snapping"], ["crossGray", "Snapping Mode"]])}
        <Divider />
        <Tool icon="snapLayer" label="All Layers" corner />
        {tools([["topo", "Topological Editing"], ["blob", "Avoid Overlap"], ["trace", "Enable Tracing"]])}
        <Divider />
        {tools([["info", "Info"], ["wrench", "Options"]])}
      </Bar>

      <main className="flex min-h-0 flex-1">
        <aside className="flex w-52 shrink-0 flex-col">
          <DockTitle title="Browser" />
          <div className="flex h-[31px] shrink-0 items-center pb-px pl-px">
            <SmallTool icon="addLayer" label="Add Selected Layers" />
            <SmallTool icon="refresh" label="Refresh Browser" />
            <SmallTool icon="funnel" label="Filter Browser" />
            <SmallTool icon="dbUp" label="Collapse Browser" />
            <SmallTool icon="info" label="Show Properties" />
          </div>
          <div className="flex h-[241px] shrink-0 border-y border-r border-[#b4b4b4] bg-white">
            <ul className="flex min-w-0 flex-1 flex-col overflow-hidden pt-px">
              {tree.map(([icon, label, open]) => (
                <TreeRow key={label} icon={icon} label={label} open={open} />
              ))}
            </ul>
            <div className="flex w-3.5 flex-col border-l border-[#b9b9b9] bg-[#e6e6e6]">
              <ScrollArrow up />
              <div className="h-[98px] border-b border-[#b9b9b9] bg-[#fafafa]" />
              <div className="flex-1" />
              <ScrollArrow />
            </div>
          </div>
          <div className="flex h-1.5 shrink-0 items-center justify-center">
            <div className="w-4 border-t border-dotted border-[#aaa]" />
          </div>
          <DockTitle title="Layers" />
          <div className="flex h-[31px] shrink-0 items-center pb-px pl-px">
            <SmallTool icon="brush" label="Layer Styling" />
            <SmallTool icon="group" label="Add Group" />
            <SmallTool icon="eye" label="Map Themes" corner />
            <SmallTool icon="funnel" label="Filter Legend" corner />
            <SmallTool icon="epsilon" label="Filter by Expression" />
            <button type="button" aria-label="Expression options" className="flex h-6 w-3 items-center justify-center">
              <Caret />
            </button>
            <SmallTool icon="dbDown" label="Expand All" />
            <SmallTool icon="dbUp" label="Collapse All" />
            <div className="flex flex-1 justify-center">
              <More />
            </div>
          </div>
          <ul className="flex-1 overflow-hidden border-y border-r border-[#b4b4b4] bg-white">
            <li className="flex h-[18px] items-center bg-[#efefef] pl-[22px]">
              <Check id="layer-washington" />
              <span className="ml-1.5 size-4 border border-[#5f6b6e] bg-[#7d8b8e]" />
              <label htmlFor="layer-washington" className="pl-1.5 font-bold underline">
                washington
              </label>
            </li>
          </ul>
        </aside>
        <div className="flex w-1.5 shrink-0 items-center justify-center">
          <div className="h-4 border-l border-dotted border-[#aaa]" />
        </div>
        <section aria-label="Map canvas" className="min-w-0 flex-1 border-y border-l border-[#aeaeae] bg-white">
          <svg viewBox="215 166 918 531" className="block h-full w-full" role="img" aria-label="washington layer">
            <polygon points={outline} fill="#7d8b8e" stroke="#3b424a" strokeWidth="1" strokeLinejoin="round" />
          </svg>
        </section>
      </main>

      <footer className="flex h-[34px] shrink-0 items-center border-b border-[#2f4a6b] pl-0.5 text-[15px] leading-5">
        <div className="flex h-[27px] w-[291px] shrink-0 items-center rounded-sm border border-[#aaa] bg-white pl-2">
          <svg width="13" height="13" viewBox="0 0 13 13" fill="none" stroke="#999" strokeWidth="1.300" aria-hidden="true">
            <circle cx="5" cy="5" r="4" />
            <path d="M8 8l4.500 4.500" />
          </svg>
          <input aria-label="Locate" placeholder="Type to locate (Ctrl+K)" className="min-w-0 flex-1 pl-[7px] text-base outline-none placeholder:text-[#7f7f7f]" />
        </div>
        <div className="min-w-0 flex-1" />
        <div className="flex shrink-0 items-center gap-1">
          <Clipped htmlFor="coord">Coordinate</Clipped>
          <input id="coord" defaultValue="44.67°, -118.28°" className="h-[27px] w-[126px] rounded-sm border border-[#aaa] bg-white px-[5px] outline-none" />
          <button type="button" aria-label="Toggle extents" className="mr-1.5">
            <svg width="17" height="18" viewBox="0 0 17 18" fill="none" stroke="#333" aria-hidden="true" className="block">
              <ellipse cx="4" cy="6" rx="2.200" ry="4.500" transform="rotate(-35 4 6)" fill="#888" />
              <ellipse cx="8.500" cy="5" rx="2.200" ry="4.500" transform="rotate(-35 8.500 5)" fill="#aaa" />
              <circle cx="9.500" cy="11.500" r="4.500" fill="#ddd" />
              <path d="M3 12l5 3M7 9l6 5M13 9l-6 5M12 5l3-3" />
              <circle cx="10" cy="12" r="1.500" fill="#fff" />
            </svg>
          </button>
          <Clipped htmlFor="scale">Scale</Clipped>
          <div className="relative flex h-[27px] w-[108px] rounded-sm border border-[#aaa] bg-white">
            <select id="scale" className="w-full appearance-none bg-transparent pl-[3px] outline-none">
              <option>1:1996101</option>
            </select>
            <div className="pointer-events-none absolute inset-y-0 right-0 flex w-5 items-center justify-center border-l border-[#aaa] bg-[#f6f6f6]">
              <Caret />
            </div>
          </div>
          <button type="button" aria-label="Lock scale" className="mr-1 ml-2">
            <svg width="12" height="16" viewBox="0 0 12 16" fill="none" aria-hidden="true" className="block">
              <path d="M2.500 8V5a3.500 3.500 0 017 0v3" stroke="#999" strokeWidth="1.800" />
              <rect x="0" y="7" width="12" height="8.500" rx="1.500" fill="#5f665f" />
            </svg>
          </button>
          <Clipped htmlFor="mag">Magnifier</Clipped>
          <Spin id="mag" label="Magnification" value="100%" />
          <div className="w-0.5" />
          <Clipped htmlFor="rot">Rotation</Clipped>
          <div className="w-0" />
          <Spin id="rot" label="Rotation angle" value="0.0 °" />
        </div>
        <div className="flex shrink-0 items-center pl-1.5 text-sm leading-5">
          <Check id="render" />
          <label htmlFor="render" className="pl-1">Render</label>
          <button type="button" className="ml-4 flex items-center gap-0.5">
            <svg width="15" height="15" viewBox="0 0 15 15" fill="none" aria-hidden="true">
              <circle cx="7.500" cy="7" r="6" fill="#b9bdb9" stroke="#646c66" />
              <path d="M1 7h13M7.500 1v13M3 3c3 2 6 2 9 0M3 11c3-2 6-2 9 0M5 1.500c-2 4-2 7 0 11M10 1.500c2 4 2 7 0 11" stroke="#646c66" strokeWidth=".8" />
            </svg>
            EPSG:4326
          </button>
          <button type="button" aria-label="Messages" className="mr-[26px] ml-[26px]">
            <svg width="17" height="16" viewBox="0 0 17 16" aria-hidden="true" className="block">
              <path d="M8 .5c4.500 0 8 2.600 8 6 0 2-1 3.600-2.500 4.700L15 15.500l-4.500-2.700C4 14 .5 10.500.5 6.500.5 3 3.500.5 8 .5z" fill="#5f665f" />
            </svg>
          </button>
        </div>
      </footer>
    </div>
  );
}
